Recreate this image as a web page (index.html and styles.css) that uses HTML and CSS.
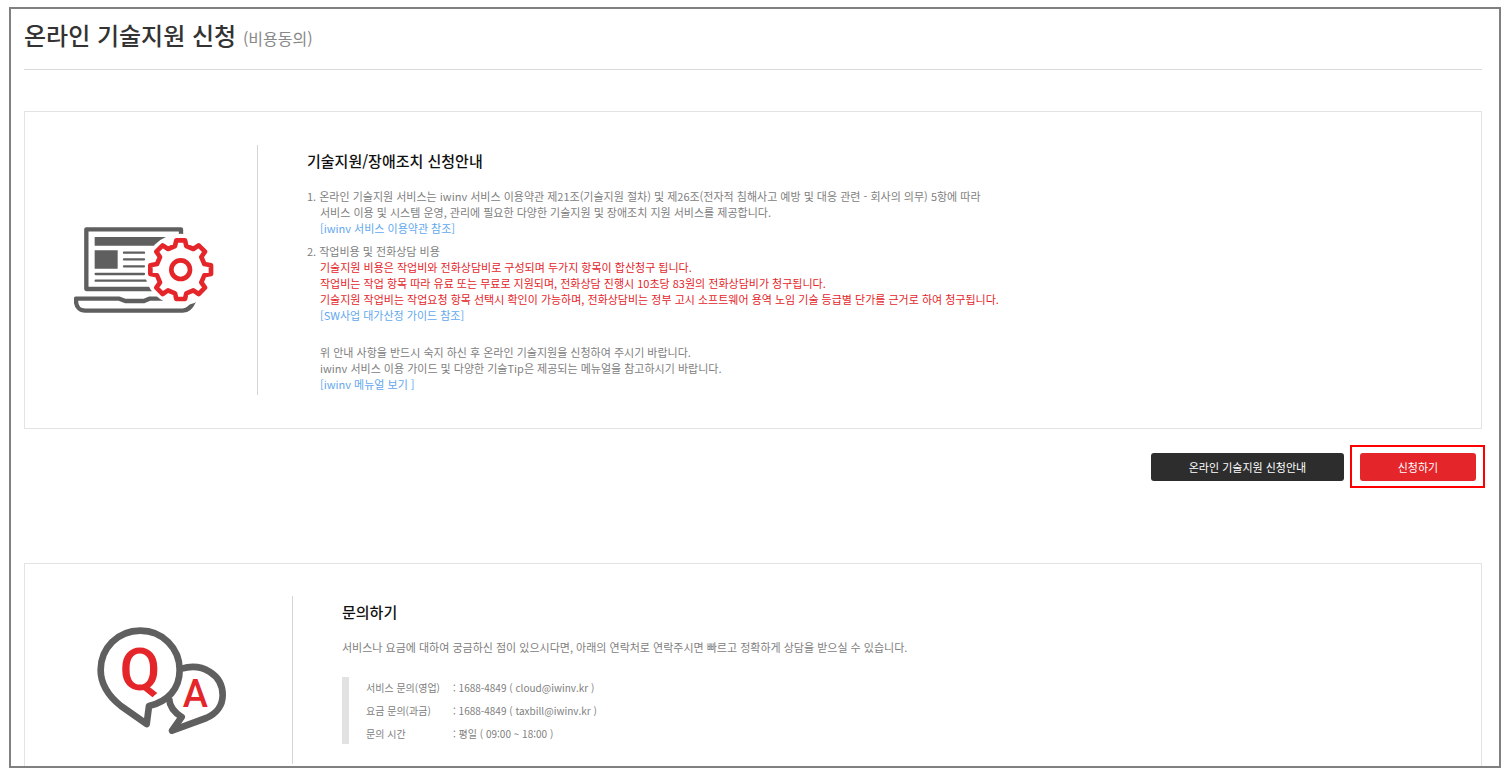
FILE: index.html
```html
<!DOCTYPE html>
<html lang="ko">
<head>
    <meta charset="UTF-8">
    <meta name="viewport" content="width=device-width, initial-scale=1.0">
    <title>온라인 기술지원 신청</title>
    <link rel="stylesheet" href="styles.css">
</head>
<body>
<main class="frame">
    <h1>온라인 기술지원 신청 <small>(비용동의)</small></h1>

    <section class="card">
        <div class="card-icon">
            <!-- laptop + gear -->
            <svg width="140" height="86" viewBox="42 50 420 258" fill="none" aria-hidden="true">
                <g stroke="#5f5f5f" stroke-width="13" stroke-linejoin="round">
                    <path d="M363 75V57H79V236H290"/>
                    <path d="M310 265H268L252 272H196L178 265H48V272C48 290 60 301 76 301H368C385 301 394 290 402 272"/>
                </g>
                <path fill="#5f5f5f" d="M104 80H330V106H104ZM104 120H173V175H104Z"/>
                <path stroke="#5f5f5f" stroke-width="7" stroke-linecap="round" d="M192 127H252M192 147H252M192 168H252M107 191H252M107 211H270"/>
                <circle cx="362" cy="178" r="108" fill="#fff"/>
                <g transform="translate(362 178)" stroke="#e4252a" stroke-width="14" stroke-linejoin="round">
                    <path d="M-17-71L-13-88L13-88L17-71L38-62L54-73L73-54L62-38L71-17L91-13L91 13L71 17L62 38L73 54L54 73L38 62L17 71L13 88L-13 88L-17 71L-38 62L-54 73L-73 54L-62 38L-71 17L-91 13L-91-13L-71-17L-62-38L-73-54L-54-73L-38-62Z"/>
                    <circle r="28"/>
                </g>
            </svg>
        </div>
        <div class="card-body">
            <h2>기술지원/장애조치 신청안내</h2>
            <div class="item">
                1. 온라인 기술지원 서비스는 iwinv 서비스 이용약관 제21조(기술지원 절차) 및 제26조(전자적 침해사고 예방 및 대응 관련 - 회사의 의무) 5항에 따라
                <p>서비스 이용 및 시스템 운영, 관리에 필요한 다양한 기술지원 및 장애조치 지원 서비스를 제공합니다.</p>
                <p><a href="#">[iwinv 서비스 이용약관 참조]</a></p>
            </div>
            <div class="item">
                2. 작업비용 및 전화상담 비용
                <p class="red">기술지원 비용은 작업비와 전화상담비로 구성되며 두가지 항목이 합산청구 됩니다.</p>
                <p class="red">작업비는 작업 항목 따라 유료 또는 무료로 지원되며, 전화상담 진행시 10초당 83원의 전화상담비가 청구됩니다.</p>
                <p class="red">기술지원 작업비는 작업요청 항목 선택시 확인이 가능하며, 전화상담비는 정부 고시 소프트웨어 용역 노임 기술 등급별 단가를 근거로 하여 청구됩니다.</p>
                <p><a href="#">[SW사업 대가산정 가이드 참조]</a></p>
            </div>
            <div class="item notice">
                <p>위 안내 사항을 반드시 숙지 하신 후 온라인 기술지원을 신청하여 주시기 바랍니다.</p>
                <p>iwinv 서비스 이용 가이드 및 다양한 기술Tip은 제공되는 메뉴얼을 참고하시기 바랍니다.</p>
                <p><a href="#">[iwinv 메뉴얼 보기 ]</a></p>
            </div>
        </div>
    </section>

    <div class="actions">
        <button type="button" class="btn btn-guide">온라인 기술지원 신청안내</button>
        <div class="highlight">
            <button type="button" class="btn btn-apply">신청하기</button>
        </div>
    </div>

    <section class="card card-contact">
        <div class="card-icon">
            <!-- Q&A bubbles -->
            <svg width="129" height="107" viewBox="50 36 387 321" fill="none" aria-hidden="true">
                <g stroke="#5f5f5f" stroke-width="20" stroke-linejoin="round">
                    <path d="M304 161C365 143 427 178 427 240C427 273 407 297 378 309L275 347L304 306C282 293 268 276 266 250"/>
                    <path d="M180 47C112 47 61 100 61 165C61 212 88 246 122 273L199 327L206 273C262 260 298 222 298 165C298 99 246 47 180 47Z"/>
                </g>
                <g class="qa-letters">
                    <text x="179" y="224" font-size="178">Q</text>
                    <text x="345" y="276" font-size="114">A</text>
                </g>
            </svg>
        </div>
        <div class="card-body">
            <h2>문의하기</h2>
            <p>서비스나 요금에 대하여 궁금하신 점이 있으시다면, 아래의 연락처로 연락주시면 빠르고 정확하게 상담을 받으실 수 있습니다.</p>
            <dl class="contact">
                <dt>서비스 문의(영업)</dt><dd>: 1688-4849 ( cloud@iwinv.kr )</dd>
                <dt>요금 문의(과금)</dt><dd>: 1688-4849 ( taxbill@iwinv.kr )</dd>
                <dt>문의 시간</dt><dd>: 평일 ( 09:00 ~ 18:00 )</dd>
            </dl>
        </div>
    </section>
</main>
</body>
</html>
```
FILE: styles.css
```css
* {
    box-sizing: border-box;
}
body {
    margin: 7px 8px 6px 9px;
    background: #fff;
    color: #808080;
    font-family: "Noto Sans CJK KR", sans-serif;
    font-size: 11px;
    line-height: 16px;
}
h1, h2, p, dl, dd {
    margin: 0;
}
a {
    color: #62a8ee;
    text-decoration: none;
}
.frame {
    height: calc(100vh - 13px);
    padding: 0 17px 0 13px;
    border: 2px solid #808080;
    overflow: hidden;
}
h1 {
    padding: 8px 0 13px;
    border-bottom: 1px solid #d9d9d9;
    color: #333;
    font-size: 24px;
    font-weight: 500;
    line-height: 36px;
}
h1 small {
    color: #888;
    font-size: 16px;
    font-weight: 400;
}
.card {
    display: flex;
    margin-top: 41px;
    padding: 33px 0;
    border: 1px solid #e3e3e3;
}
.card-icon {
    display: flex;
    flex: none;
    align-items: center;
    justify-content: center;
    width: 232px;
    padding-left: 6px;
}
.card-body {
    flex: 1;
    min-height: 250px;
    padding-left: 49px;
    border-left: 1px solid #d5d5d5;
}
h2 {
    margin-bottom: 11px;
    color: #111;
    font-size: 15px;
    font-weight: 500;
    line-height: 32px;
}
.item {
    margin-bottom: 7px;
}
.item p {
    padding-left: 13px;
}
.item.notice {
    margin: 21px 0 0;
}
.red {
    color: #e4252a;
}
/* buttons */
.actions {
    display: flex;
    align-items: center;
    justify-content: flex-end;
    gap: 6px;
    margin: 16px -3px 0 0;
}
.btn {
    display: block;
    height: 28px;
    padding: 0;
    border: none;
    border-radius: 3px;
    color: #fff;
    font-family: inherit;
    font-size: 11px;
    cursor: pointer;
}
.btn-guide {
    width: 193px;
    background: #2d2d2d;
}
.btn-apply {
    width: 116px;
    background: #e4252a;
}
.highlight {
    padding: 6px 7px 5px 8px;
    border: 2px solid #f00;
}
/* contact */
.card-contact {
    margin-top: 75px;
    padding-top: 32px;
}
.card-contact .card-icon {
    width: 267px;
}
.card-contact .card-body {
    min-height: 168px;
}
.contact {
    display: grid;
    grid-template-columns: 87px 1fr;
    row-gap: 2px;
    margin-top: 22px;
    padding-left: 17px;
    border-left: 7px solid #e2e2e2;
    font-size: 10px;
    line-height: 21px;
}
.qa-letters {
    fill: #e4252a;
    font-family: Roboto, sans-serif;
    font-weight: 500;
    text-anchor: middle;
}
```
